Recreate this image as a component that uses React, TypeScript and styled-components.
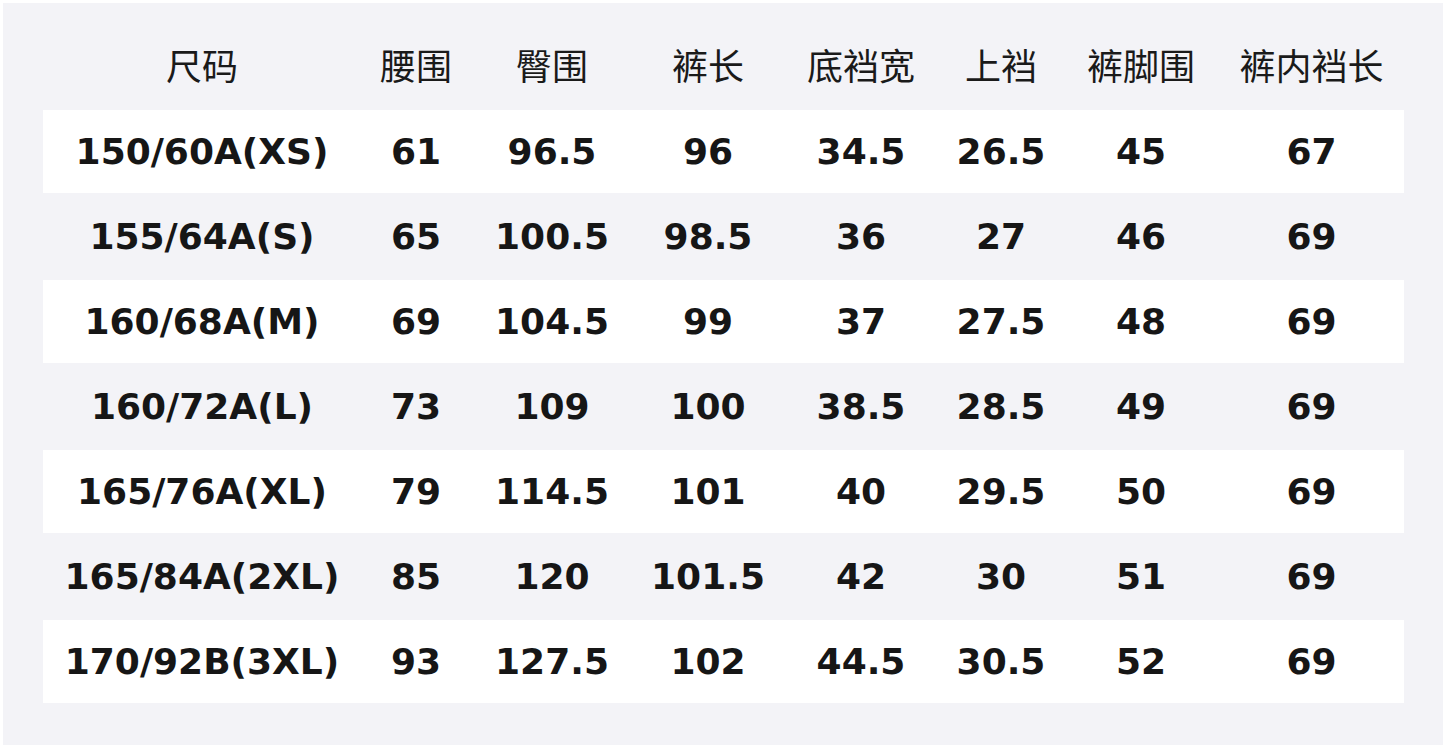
import React from 'react'
import styled, { createGlobalStyle } from 'styled-components'

const GlobalStyle = createGlobalStyle`
  html, body {
    margin: 0;
    padding: 0;
    background: #ffffff;
  }
`

const columns = [
  { title: '尺码', width: 318 },
  { title: '腰围', width: 110 },
  { title: '臀围', width: 162 },
  { title: '裤长', width: 150 },
  { title: '底裆宽', width: 156 },
  { title: '上裆', width: 124 },
  { title: '裤脚围', width: 156 },
  { title: '裤内裆长', width: 185 }
]

const rows = [
  ['150/60A(XS)', '61', '96.5', '96', '34.5', '26.5', '45', '67'],
  ['155/64A(S)', '65', '100.5', '98.5', '36', '27', '46', '69'],
  ['160/68A(M)', '69', '104.5', '99', '37', '27.5', '48', '69'],
  ['160/72A(L)', '73', '109', '100', '38.5', '28.5', '49', '69'],
  ['165/76A(XL)', '79', '114.5', '101', '40', '29.5', '50', '69'],
  ['165/84A(2XL)', '85', '120', '101.5', '42', '30', '51', '69'],
  ['170/92B(3XL)', '93', '127.5', '102', '44.5', '30.5', '52', '69']
]

const gridTemplate = columns.map(c => `${c.width}px`).join(' ')

const Panel = styled.div`
  margin: 3px;
  width: 1440px;
  height: 742px;
  box-sizing: border-box;
  padding: 24px 39px 0 40px;
  background: #f3f3f7;
`

const HeaderRow = styled.div`
  display: grid;
  grid-template-columns: ${gridTemplate};
  height: 82px;
  align-items: center;
`

const HeaderCell = styled.div`
  text-align: center;
  padding-bottom: 8px;
  font-family: 'Noto Sans CJK SC', 'Noto Sans', sans-serif;
  font-weight: 400;
  font-size: 36px;
  color: #1a1a1a;
`

const Row = styled.div<{ $striped: boolean }>`
  display: grid;
  grid-template-columns: ${gridTemplate};
  align-items: center;
  height: ${p => (p.$striped ? '83px' : '85px')};
  margin: ${p => (p.$striped ? '1px 0' : '0')};
  background: ${p => (p.$striped ? '#ffffff' : 'transparent')};
`

const Cell = styled.div`
  text-align: center;
  font-family: 'DejaVu Sans', 'Noto Sans CJK SC', sans-serif;
  font-weight: 700;
  font-size: 36px;
  color: #161616;
  white-space: nowrap;
`

const App = () => {
  return (
    <>
      <GlobalStyle />
      <Panel>
        <HeaderRow>
          {columns.map(c => (
            <HeaderCell key={c.title}>{c.title}</HeaderCell>
          ))}
        </HeaderRow>
        {rows.map((r, i) => (
          <Row key={r[0]} $striped={i % 2 === 0}>
            {r.map((v, j) => (
              <Cell key={j}>{v}</Cell>
            ))}
          </Row>
        ))}
      </Panel>
    </>
  )
}

export default App
